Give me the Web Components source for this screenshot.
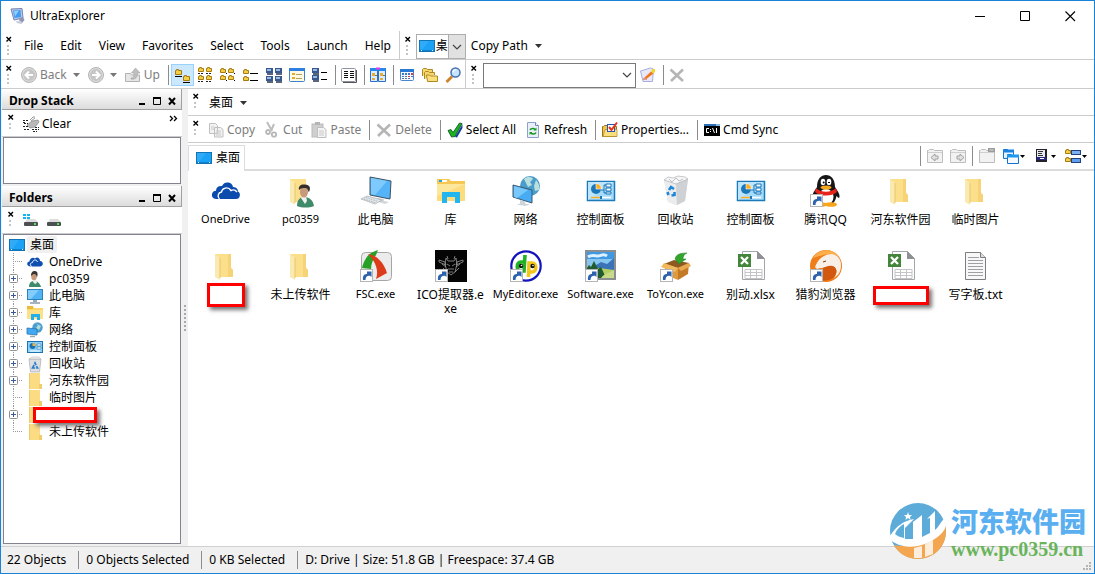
<!DOCTYPE html>
<html lang="en">
<head>
<meta charset="utf-8">
<title>UltraExplorer</title>
<style>
  body { margin: 0; background: #fff; color: #000; font: 12px/16px "Noto Sans", "Noto Sans CJK SC", sans-serif; }
</style>
</head>
<body>
<ultra-explorer></ultra-explorer>

<template id="ultra-explorer">
  <style>
    :host { display: flex; flex-direction: column; position: relative; box-sizing: border-box; min-height: 100vh; border: 1px solid #1883d7; background: #fff; }
    .bar { display: flex; align-items: center; box-sizing: border-box; height: 29px; padding-top: 2px; border-bottom: 1px solid #ccc; }
    .group { display: flex; align-items: center; align-self: stretch; margin-top: -2px; padding-top: 2px; }
    .group.end { border-right: 1px solid #ccc; }
    .menus { gap: 1px; }
    .menus bar-grip { margin-right: -2px; }
    .small { height: 27px; }
    .main { display: flex; flex: 1; }
    aside { display: flex; flex-direction: column; flex: none; width: 180px; padding: 0 0 1px 1px; background: #f0f0f0; }
    aside .bar { height: 27px; background: #fff; padding-left: 1px; }
    .stack { box-sizing: border-box; height: 47px; margin: 0 1px 2px; border: 1px solid #83838f; background: #fff; }
    nav { flex: 1; box-sizing: border-box; margin: 0 1px 1px; border: 1px solid #83838f; background: #fff; padding: 1px 0; }
    .splitter { flex: none; display: flex; align-items: center; justify-content: center; width: 6px; background: #f0f0f0; }
    .splitter i { width: 2px; height: 26px; background: repeating-linear-gradient(#a8a8a8 0 2px, #f0f0f0 2px 4px); }
    section { flex: 1; min-width: 0; display: flex; flex-direction: column; }
    .tabs { display: flex; align-items: center; box-sizing: border-box; height: 28px; border-bottom: 2px solid #dcdcdc; padding-right: 3px; }
    .tab { display: flex; align-items: center; gap: 4px; align-self: flex-end; box-sizing: border-box; height: 26px; margin-bottom: -2px; padding: 0 4px 2px 7px; border: 1px solid #dcdcdc; border-bottom: 0; background: #fff; font: inherit; line-height: 16px; color: #000; }
    .files { display: grid; grid-template-columns: repeat(auto-fill, 75px); grid-auto-rows: 75px; padding: 4px 20px 0 0; margin: 0; }
    .path { display: flex; align-items: center; gap: 7px; padding: 0 5px; border: 0; background: none; font: inherit; }
    .drive { position: relative; display: flex; width: 50px; height: 25px; }
    .drive select { appearance: none; width: 50px; border: 1px solid #adadad; border-radius: 0; padding: 0 0 0 19px; margin: 0; background: linear-gradient(90deg, #fff 31px, #adadad 31px 32px, #e1e1e1 32px); font: inherit; color: #000; }
    .drive ui-icon { position: absolute; pointer-events: none; left: 3px; top: 4px; }
    .drive ui-icon.chev { left: 33px; top: 5px; }
    .combo { display: flex; align-items: center; box-sizing: border-box; width: 153px; height: 25px; margin: 0 1px; border: 1px solid #7a7a7a; }
    .combo input { flex: 1; min-width: 0; border: 0; padding: 0 4px; font: inherit; outline: 0; background: none; }
    .combo button { border: 0; background: none; padding: 0; }
    footer { display: flex; align-items: center; height: 26px; padding: 0 0 0 6px; border-top: 1px solid #d0d0d0; background: #f0f0f0; }
    footer span + span { margin-left: 12px; padding-left: 7px; border-left: 1px solid #8c8c8c; line-height: 18px; }
    .grip { margin: auto 1px 1px auto; }
    .mark { position: absolute; right: 8px; bottom: 12px; display: flex; align-items: flex-end; gap: 5px; font-weight: 700; pointer-events: none; }
    .mark ui-icon { margin-bottom: 2px; }
    .mark b { display: block; font: 900 27px/32px "Noto Sans CJK SC", sans-serif; color: #5aaff0; }
    .mark em { display: block; font: 700 20px/24px "Liberation Serif", serif; color: #69b45a; }
  </style>
  <title-bar>UltraExplorer</title-bar>
  <div class="bar">
    <div class="group end menus">
      <bar-grip dots="3"></bar-grip>
      <menu-item>File</menu-item><menu-item>Edit</menu-item><menu-item>View</menu-item><menu-item>Favorites</menu-item><menu-item>Select</menu-item><menu-item>Tools</menu-item><menu-item>Launch</menu-item><menu-item>Help</menu-item>
    </div>
    <bar-grip dots="3"></bar-grip>
    <label class="drive"><select aria-label="Location"><option>桌</option></select><ui-icon name="desktop"></ui-icon><ui-icon class="chev" name="chevron"></ui-icon></label>
    <button class="path" type="button">Copy Path <ui-icon name="caret" w="7"></ui-icon></button>
  </div>
  <div class="bar">
    <div class="group end">
      <bar-grip dots="3"></bar-grip>
      <tool-button icon="back" disabled menu>Back</tool-button>
      <tool-button icon="forward" disabled menu></tool-button>
      <tool-button icon="up" disabled>Up</tool-button>
      <tool-sep></tool-sep>
      <tool-button square icon="v1" active></tool-button><tool-button square icon="v2"></tool-button><tool-button square icon="v3"></tool-button><tool-button square icon="v4"></tool-button><tool-button square icon="v5"></tool-button><tool-button square icon="v6"></tool-button><tool-button square icon="v7"></tool-button>
      <tool-sep></tool-sep>
      <tool-button square icon="columns"></tool-button>
      <tool-sep></tool-sep>
      <tool-button square icon="dual"></tool-button>
      <tool-sep></tool-sep>
      <tool-button square icon="calendar"></tool-button><tool-button square icon="folders"></tool-button><tool-button square icon="search"></tool-button>
    </div>
    <bar-grip dots="3"></bar-grip>
    <div class="combo"><input type="text" aria-label="Filter"><button type="button" aria-label="Show filters"><ui-icon name="chevron"></ui-icon></button></div>
    <tool-button square icon="edit"></tool-button>
    <tool-sep></tool-sep>
    <tool-button square icon="delete" disabled></tool-button>
  </div>
  <div class="main">
    <aside>
      <panel-header>Drop Stack</panel-header>
      <div class="bar"><bar-grip></bar-grip><tool-button icon="eraser">Clear</tool-button><ui-icon name="more" style="margin:0 0 10px auto"></ui-icon></div>
      <div class="stack"></div>
      <panel-header>Folders</panel-header>
      <div class="bar"><bar-grip></bar-grip><tool-button square icon="drivewin"></tool-button><tool-button square icon="drive"></tool-button></div>
      <nav aria-label="Folders">
        <tree-item root icon="desktop">桌面</tree-item>
        <tree-item icon="onedrive">OneDrive</tree-item>
        <tree-item plus icon="user">pc0359</tree-item>
        <tree-item plus icon="pc">此电脑</tree-item>
        <tree-item plus icon="library">库</tree-item>
        <tree-item plus icon="network">网络</tree-item>
        <tree-item plus icon="control">控制面板</tree-item>
        <tree-item plus icon="bin">回收站</tree-item>
        <tree-item plus icon="folder">河东软件园</tree-item>
        <tree-item icon="folder">临时图片</tree-item>
        <tree-item plus icon="folder" hiddenname></tree-item>
        <tree-item last icon="folder">未上传软件</tree-item>
      </nav>
    </aside>
    <div class="splitter"><i></i></div>
    <section>
      <div class="bar small"><bar-grip></bar-grip><button class="path" type="button">桌面 <ui-icon name="caret" w="7"></ui-icon></button></div>
      <div class="bar small">
        <bar-grip></bar-grip>
        <tool-button icon="copy" disabled>Copy</tool-button>
        <tool-button icon="cut" disabled>Cut</tool-button>
        <tool-button icon="paste" disabled>Paste</tool-button>
        <tool-sep></tool-sep>
        <tool-button icon="delete" disabled>Delete</tool-button>
        <tool-sep></tool-sep>
        <tool-button icon="check">Select All</tool-button>
        <tool-button icon="refresh">Refresh</tool-button>
        <tool-sep></tool-sep>
        <tool-button icon="props">Properties...</tool-button>
        <tool-sep></tool-sep>
        <tool-button icon="cmd">Cmd Sync</tool-button>
      </div>
      <div class="tabs">
        <button class="tab" type="button"><ui-icon name="desktop"></ui-icon>桌面</button>
        <tool-sep style="margin-left:auto"></tool-sep>
        <tool-button square icon="tabback" disabled></tool-button><tool-button square icon="tabnext" disabled></tool-button>
        <tool-sep></tool-sep>
        <tool-button square icon="tabclose" disabled></tool-button>
        <tool-button narrow icon="tabs"></tool-button><tool-button narrow icon="disk"></tool-button><tool-button narrow icon="layout"></tool-button>
      </div>
      <div class="files">
        <file-item icon="onedrive32">OneDrive</file-item>
        <file-item icon="user32">pc0359</file-item>
        <file-item cjk icon="pc32">此电脑</file-item>
        <file-item cjk icon="library32">库</file-item>
        <file-item cjk icon="network32">网络</file-item>
        <file-item cjk icon="control32">控制面板</file-item>
        <file-item cjk icon="bin32">回收站</file-item>
        <file-item cjk icon="control32">控制面板</file-item>
        <file-item cjk link icon="qq32">腾讯QQ</file-item>
        <file-item cjk icon="folder32">河东软件园</file-item>
        <file-item cjk icon="folder32">临时图片</file-item>
        <file-item icon="folder32" hiddenname="tall"></file-item>
        <file-item cjk icon="folder32">未上传软件</file-item>
        <file-item link icon="fsc32">FSC.exe</file-item>
        <file-item cjk link icon="ico32">ICO提取器.exe</file-item>
        <file-item link icon="dp32">MyEditor.exe</file-item>
        <file-item link icon="photo32">Software.exe</file-item>
        <file-item link icon="box32">ToYcon.exe</file-item>
        <file-item cjk icon="xlsx32">别动.xlsx</file-item>
        <file-item cjk link icon="fox32">猎豹浏览器</file-item>
        <file-item icon="xlsx32" hiddenname="wide"></file-item>
        <file-item cjk icon="txt32">写字板.txt</file-item>
      </div>
    </section>
  </div>
  <footer><span>22 Objects</span><span>0 Objects Selected</span><span>0 KB Selected</span><span>D: Drive | Size: 51.8 GB | Freespace: 37.4 GB</span><ui-icon class="grip" name="grip" w="12" h="12"></ui-icon></footer>
  <div class="mark"><ui-icon name="logo" w="56" h="56"></ui-icon><div><b>河东软件园</b><em>www.pc0359.cn</em></div></div>
</template>

<template id="title-bar">
  <style>
    :host { display: flex; align-items: center; height: 30px; padding: 0 2px 0 8px; gap: 5px; }
    .ctl { margin-left: auto; display: flex; }
    button { display: grid; place-items: center; width: 45px; height: 29px; padding: 0; border: 0; background: none; }
  </style>
  <ui-icon name="app"></ui-icon><span><slot></slot></span>
  <div class="ctl"><button type="button" aria-label="Minimize"><ui-icon name="wmin"></ui-icon></button><button type="button" aria-label="Maximize"><ui-icon name="wmax"></ui-icon></button><button type="button" aria-label="Close"><ui-icon name="wclose"></ui-icon></button></div>
</template>

<template id="panel-header">
  <style>
    :host { display: flex; align-items: center; box-sizing: border-box; height: 21px; padding: 3px 2px 0 7px; font-weight: 700; background: linear-gradient(#fff, #dcdcdc); border: solid #a0a0a0; border-width: 0 1px 1px 0; }
    div { margin-left: auto; display: flex; }
    button { display: grid; width: 15px; height: 16px; padding: 0; border: 0; background: none; place-items: center; }
  </style>
  <span><slot></slot></span><div><button type="button" aria-label="Minimize"><ui-icon name="pmin" w="10" h="10"></ui-icon></button><button type="button" aria-label="Maximize"><ui-icon name="pmax" w="10" h="10"></ui-icon></button><button type="button" aria-label="Close"><ui-icon name="pclose" w="10" h="10"></ui-icon></button></div>
</template>

<template id="menu-item">
  <style>
    :host { display: block; }
    button { border: 0; padding: 0 8px; background: none; font: inherit; color: inherit; }
  </style>
  <button type="button"><slot></slot></button>
</template>

<template id="tool-button">
  <style>
    :host { display: block; }
    button { display: flex; align-items: center; box-sizing: border-box; height: 22px; gap: 3px; border: 0; padding: 0 5px 0 4px; background: none; font: inherit; line-height: 16px; color: inherit; white-space: nowrap; }
    button:disabled { color: #7d7d7d; }
    :host([menu]) button { padding: 0 4px; }
    :host([square]) button { width: 23px; padding: 0; gap: 0; justify-content: center; }
    :host([narrow]) button { gap: 1px; padding: 0 4px 0 5px; }
    :host([active]) button { background: #cce8ff; border: 1px solid #99d1ff; }
    .menu { margin-left: 3px; }
  </style>
  <button type="button"></button>
</template>

<template id="file-item">
  <style>
    :host { display: flex; flex-direction: column; align-items: center; gap: 5px; font-size: 11px; line-height: 14px; text-align: center; word-break: break-all; }
    :host([cjk]) { font-size: 12px; }
    .pic { position: relative; display: block; width: 32px; height: 32px; }
    .pic .link { position: absolute; left: 0; bottom: 0; }
    .name { box-sizing: border-box; padding: 0 3px; }
    :host([cjk]) .name { padding-top: 1px; }
    .veil { box-sizing: border-box; width: 38px; height: 24px; margin-top: -4px; background: #fff; border: 3px solid #f00; box-shadow: 3px 3px 4px #777; z-index: 1; }
    .veil.wide { width: 56px; height: 19px; margin-top: -1px; }
  </style>
  <span class="pic"></span>
</template>

<template id="tree-item">
  <style>
    :host { display: flex; align-items: center; height: 17px; padding-left: 5px; }
    .branch { flex: none; align-self: stretch; width: 18px; background: repeating-linear-gradient(90deg, #999 0 1px, #fff 1px 2px) 4px 8px / 10px 1px no-repeat, repeating-linear-gradient(#999 0 1px, #fff 1px 2px) 4px 0 / 1px 100% no-repeat; }
    :host([last]) .branch { background: repeating-linear-gradient(90deg, #999 0 1px, #fff 1px 2px) 4px 8px / 10px 1px no-repeat, repeating-linear-gradient(#999 0 1px, #fff 1px 2px) 4px 0 / 1px 9px no-repeat; }
    :host([root]) .branch { display: none; }
    .branch ui-icon { margin-top: 4px; }
    .name { padding: 0 2px; margin-left: 4px; line-height: 17px; white-space: nowrap; }
    :host([root]) .name { background: #f0f0f0; border-radius: 2px; margin-left: 2px; padding: 0 3px; }
    .veil { box-sizing: border-box; width: 64px; height: 16px; margin-left: -10px; background: #fff; border: 3px solid #f00; box-shadow: 3px 3px 4px #777; z-index: 1; }
  </style>
  <span class="branch"></span>
</template>

<script>
const tiny = (x, y) => `<path d="M${x}.500 ${y + 1}.500h1v-1h2v1h2v3h-5z" fill="#f3cf45" stroke="#a87b10"/>`;
const screen = (x, y) => `<rect x="${x}" y="${y}" width="7" height="5" fill="#38598f"/><rect x="${x + 1}" y="${y + 1}" width="4" height="2" fill="#9db9dc"/><rect x="${x + 1}" y="${y + 5}" width="6" height="2" fill="#5b6678"/>`;
const tabFolder = `<path d="M.5 14.500v-12h1l1-1h4l1 1h8v12z" fill="#f2f2f2" stroke="#bdbdbd"/><path d="M1 4.500h14" stroke="#cfcfcf"/>`;
const ICONS = {
  app: `<path d="M2 1l11-.5 1 9.500-9 2z" fill="#b9c6e6" stroke="#7685b4"/><path d="M4 2.500l7.500-.5.500 7-6.500 1z" fill="#3f9bf3"/><path d="M5 3l5-.5-4 6z" fill="#8fd0ff"/><path d="M10 10l4-1 1.500 3-3 3.500-5-.5 3-2z" fill="#8e96b5"/><path d="M7 13h5l1 2H8z" fill="#c9cee0"/>`,
  wmin: `<path d="M3 8.500h10" stroke="#000"/>`,
  wmax: `<path d="M3.500 3.500h9v9h-9z" fill="none" stroke="#000"/>`,
  wclose: `<path d="M3.500 3.500l9.500 9.500M13 3.500L3.500 13" stroke="#000" stroke-width="1.100"/>`,
  pmin: `<path d="M2 8h6" stroke="#000" stroke-width="2"/>`,
  pmax: `<path d="M1.500 2.500h7v6h-7z" fill="none" stroke="#000"/><path d="M1 2h8" stroke="#000" stroke-width="2"/>`,
  pclose: `<path d="M2 2l6 6.500M8 2L2 8.500" stroke="#000" stroke-width="2"/>`,
  caret: `<path d="M0 6h7l-3.500 4z" fill="#333"/>`,
  caretoff: `<path d="M0 6h7l-3.500 4z" fill="#777"/>`,
  caretsm: `<path d="M0 7h5l-2.500 3z" fill="#000"/>`,
  chevron: `<path d="M4 6l4 4 4-4" fill="none" stroke="#444" stroke-width="1.200"/>`,
  more: `<path d="M4 5l2.500 2.500L4 10M8 5l2.500 2.500L8 10" fill="none" stroke="#000" stroke-width="1.300"/>`,
  grip: `<path d="M8 2h2v2h-2zM8 5h2v2h-2zM5 5h2v2h-2zM8 8h2v2h-2zM5 8h2v2h-2zM2 8h2v2h-2z" fill="#b4b4b4"/>`,
  plus: `<rect x=".5" y=".5" width="8" height="8" rx="1" fill="#fff" stroke="#919191"/><path d="M2 4.500h5M4.500 2v5" stroke="#3a5a9c"/>`,
  desktop: `<rect x=".5" y="2.500" width="15" height="11" fill="#1ba1f5" stroke="#1274b5"/><path d="M1 3h9l-6 8H1z" fill="#30abf8"/><path d="M1 12.500h14" stroke="#0e7fca"/><path d="M2 12.500h1M13 12.500h1" stroke="#d4efff"/>`,
  back: `<circle cx="8" cy="8" r="7.500" fill="#dcdcdc" stroke="#b4b4b4"/><circle cx="8" cy="8" r="6" fill="#c6c6c6"/><path d="M12 8H5M8 4.500L4.500 8 8 11.500" fill="none" stroke="#fff" stroke-width="2"/>`,
  forward: `<circle cx="8" cy="8" r="7.500" fill="#dcdcdc" stroke="#b4b4b4"/><circle cx="8" cy="8" r="6" fill="#c6c6c6"/><path d="M4 8h7M8 4.500L11.500 8 8 11.500" fill="none" stroke="#fff" stroke-width="2"/>`,
  up: `<path d="M.5 14.500v-8h5l1 1.500h8v6.500z" fill="#e6e6e6" stroke="#b2b2b2"/><path d="M6 11c3 0 3-2 3-5H6.500L10.500 1 15 6h-2.500c0 4-2 7-6.500 6z" fill="#bfbfbf" stroke="#a3a3a3" stroke-width=".6"/>`,
  v1: `<path d="M1.500 3.500h1v-1h2v1h3v4h-6z" fill="#f3cf45" stroke="#a87b10"/><path d="M9.500 9.500h1v-1h2v1h3v4h-6z" fill="#f3cf45" stroke="#a87b10"/><path d="M1 9.500h7M9 15.500h7" stroke="#000"/>`,
  v2: [1, 9].map(x => tiny(x, 0) + tiny(x, 8)).join('') + `<path d="M1 6.500h2M4 6.500h2M9 6.500h2M12 6.500h2M1 14.500h2M4 14.500h2M9 14.500h2M12 14.500h2" stroke="#222"/>`,
  v3: [0, 8].map(x => tiny(x, 1) + tiny(x, 8)).join('') + `<path d="M6 6.500h1M14 6.500h1M6 13.500h1M14 13.500h1" stroke="#000"/>`,
  v4: tiny(0, 2) + tiny(0, 9) + `<path d="M7 6.500h8M7 13.500h8" stroke="#000"/>`,
  v5: screen(0, 1) + screen(9, 1) + screen(0, 9) + screen(9, 9),
  v6: `<rect x=".5" y="1.500" width="15" height="13" rx="1" fill="#fffbe3" stroke="#3a82cf"/><path d="M0 2.500h16" stroke="#2d7fe0" stroke-width="3"/><path d="M3 6h3v2H3zM3 10h3v2H3z" fill="#e5a92c"/><path d="M7 7.500h6M7 11.500h6" stroke="#b9a05e"/>`,
  v7: screen(0, 1) + screen(0, 8) + `<path d="M9 5.500h6M9 12.500h6" stroke="#000"/>`,
  columns: `<rect x=".5" y="1.500" width="14" height="13" rx="1" fill="#fff" stroke="#8c94a4"/><path d="M15.500 3v12.500H2" stroke="#555" fill="none"/><path d="M3 4.500h4M3 6.500h4M3 8.500h4M3 10.500h4M9 4.500h4M9 6.500h4M9 8.500h4M9 10.500h4" stroke="#111"/>`,
  dual: `<path d="M.5 1.500h7v13h-7zM8.500 1.500h7v13h-7z" fill="#dcecff" stroke="#2a70c8"/><path d="M0 2.500h16" stroke="#2785ec" stroke-width="3"/><path d="M6 1.500h4" stroke="#e339e8" stroke-width="2"/><path d="M2 6h3v3H2zM2 11h3v2H2zM10 6h3v3h-3zM10 11h3v2h-3z" fill="#e5ad35"/><path d="M5 8.500h2M13 8.500h2" stroke="#987129"/>`,
  calendar: `<rect x="1.500" y="2.500" width="13" height="11" rx="1" fill="#f5f9ff" stroke="#4a87cf"/><path d="M1 3.500h14" stroke="#2879d6" stroke-width="3"/><path d="M3 6h2v2H3zM6 6h2v2H6zM9 6h2v2H9z" fill="#3978cb"/><path d="M12 6h2v2h-2zM9 9h2v1H9z" fill="#e53939"/><path d="M3 9h2v1H3zM6 9h2v1H6zM12 9h2v1h-2zM3 11h2v1H3zM6 11h2v1H6zM9 11h2v1H9z" fill="#5479a8"/>`,
  folders: `<path d="M.5 9V2.500l1-1h3l1 1h5V5" fill="#f4d771" stroke="#b08a20"/><path d="M2.500 12V5.500l1-1h3l1 1h5V8" fill="#f4d771" stroke="#b08a20"/><path d="M5.500 14.500l-1-6.500h3l1 1h7v5.500z" fill="#fae07b" stroke="#b08a20"/>`,
  search: `<path d="M1.500 15L7 9.500" stroke="#cf8129" stroke-width="2.800"/><circle cx="10.500" cy="5.500" r="4.500" fill="#c5e4ff" stroke="#4a6fae" stroke-width="1.500"/><path d="M8 5c.5-2 2-2.500 3-2.500" stroke="#fff" fill="none" stroke-width="1.200"/>`,
  edit: `<path d="M.5 4l10-3 3 1-1 12.500H3z" fill="#e7e9fa" stroke="#a8addb"/><path d="M4 11L11 4.500l2.500 2L7 11.500z" fill="#f07820"/><path d="M11 4l1.500-2H15v3l-2 1.500z" fill="#f6d42b"/><path d="M3 12h4" stroke="#e54b1b"/>`,
  delete: `<path d="M1.500 2.500L14 14M14 2.500L2 14" stroke="#b5b5b5" stroke-width="2.600"/>`,
  eraser: `<path d="M0 4.500h5M1 7.500h4M0 10.500h6M1 13.500h5M9 13.500h7M12 11.500h4M0 6.500h2M10 15.500h4" stroke="#222" stroke-dasharray="2 1"/><path d="M4 9L9 5l6-1 1 2-4 5-5 1z" fill="#b9b9b9" stroke="#777" stroke-width=".6"/><path d="M7 4l3-3 2 0M8 5l4-3" stroke="#999" fill="none"/>`,
  drivewin: `<path d="M0 1h3v2H0zM4 1h3v2H4zM0 4h3v2H0zM4 4h3v2H4z" fill="#14b4f0"/><path d="M2 9l2-3h8l3 3z" fill="#ddd"/><rect x="1" y="9" width="14" height="4" rx="1" fill="#4d5053"/><path d="M11 11h2" stroke="#53e34d" stroke-width="2"/>`,
  drive: `<path d="M2 9l2-3h8l3 3z" fill="#ddd"/><rect x="1" y="9" width="14" height="4" rx="1" fill="#4d5053"/><path d="M11 11h2" stroke="#53e34d" stroke-width="2"/>`,
  copy: `<path d="M1.500 1.500h6l2 2v8h-8zM6.500 5.500h6l2.500 2v7.500h-8.500z" fill="#f2f2f2" stroke="#c0c0c0"/><path d="M3 5h3M3 7h3M8 9h5M8 11h5M8 13h5" stroke="#cacaca"/>`,
  cut: `<path d="M3 0l5 9M10 2L7 9" stroke="#bdbdbd" stroke-width="2"/><circle cx="4" cy="10" r="2" fill="none" stroke="#b7b7b7" stroke-width="1.800"/><circle cx="10" cy="12.500" r="2.200" fill="none" stroke="#b7b7b7" stroke-width="1.800"/>`,
  paste: `<rect x="1" y="2" width="11" height="13" fill="#cfcfcf" stroke="#bbb"/><rect x="4" y="0" width="5" height="3" fill="#b5b5b5"/><path d="M6.500 5.500h6l2.500 2v8h-8.500z" fill="#f4f4f4" stroke="#bfbfbf"/><path d="M8 9h5M8 11h5M8 13h5" stroke="#cacaca"/>`,
  check: `<path d="M1 8.500l3-1 2 3L12.500 1 15 1.500 8 14.500l-3.500.5z" fill="#18b51c" stroke="#0b4a22" stroke-width=".8"/><path d="M8 15l7.500-13v4L10 15.500z" fill="#163f9c"/>`,
  refresh: `<path d="M2.500.5h8l3 3v12h-11z" fill="#e9f0fb" stroke="#8ba3cb"/><path d="M10.500.5v3h3" fill="#fff" stroke="#6c88b8"/><path d="M5 8c1-2 4-2 5-.5M11 10.500c-1 2-4 2-5 .5" stroke="#159a1c" stroke-width="1.500" fill="none"/><path d="M8.500 8.500h3v-3zM4.500 13v-3h3z" fill="#159a1c"/>`,
  props: `<path d="M.5 14.500v-10h1l1-1h3l1 1h8v10z" fill="#efc54a" stroke="#9c7415"/><path d="M3 7.500h12v7H1z" fill="#fadf7f" stroke="#b48b24" stroke-width=".7"/><rect x="5.500" y="2.500" width="7" height="7" fill="#fff" stroke="#2657b5"/><path d="M7 5l2.500 3L15 .5" stroke="#e8311e" stroke-width="2" fill="none"/>`,
  cmd: `<rect y="2" width="16" height="12" fill="#000"/><rect y="2" width="16" height="2" fill="#2b6fb7"/><rect x="12" y="2" width="4" height="2" fill="#8bb6dc"/><path d="M5 6.500H2.500v4H5M6.500 7v1M6.500 9v1M8.500 6l2 5M12.500 6v5" stroke="#fff" fill="none"/>`,
  tabback: tabFolder + `<path d="M11 8H8V6L4 9.500 8 13v-2h3z" fill="#e2e2e2" stroke="#a2a2a2"/>`,
  tabnext: tabFolder + `<path d="M7 8h3V6l4 3.500L10 13v-2H7z" fill="#e2e2e2" stroke="#a2a2a2"/>`,
  tabclose: tabFolder + `<rect x="9" y="0" width="7" height="4" fill="#9b9b9b"/><path d="M10.500 2h4" stroke="#ddd"/>`,
  tabs: `<path d="M.5 10.500v-9h4l1 1.500h5v7z" fill="#eaf4ff" stroke="#1272cd"/><path d="M0 3h11" stroke="#1a83e2" stroke-width="3"/><path d="M4.500 15.500v-9h4l1 1.500h6v7.500z" fill="#f4faff" stroke="#1272cd"/><path d="M4 8h12" stroke="#1a9bf0" stroke-width="3"/>`,
  disk: `<path d="M2 1h11v13H2z" fill="#20222c"/><path d="M3 2h8v7H3z" fill="#e6e8f2"/><path d="M4 3.500h5M4 5.500h4M4 7.500h5" stroke="#333"/><path d="M2 9h10l1 3H3z" fill="#262a80"/><path d="M6 10.500h4" stroke="#fff"/>`,
  layout: tiny(0, 1) + tiny(0, 9) + `<rect x="6.500" y="2.500" width="9" height="4" fill="#7cb1f1" stroke="#23417d"/><rect x="6.500" y="10.500" width="9" height="4" fill="#5f9ff1" stroke="#23417d"/>`,
  onedrive: `<path d="M4 12.500C1 12.500 0 11 .2 9.500.4 8 2 7.500 2.500 7.500 3 4 6 3 8 4.500 10 2.500 13 4 13 7c2 0 3 1.500 2.800 3-.2 1.500-1.300 2.500-2.800 2.500z" fill="#0f4fb0"/><path d="M5 12.500c-3-1-1.500-4 .5-4C6 5.500 9.500 5 10.500 8" stroke="#fff" stroke-width="1" fill="none"/>`,
  user: `<path d="M2 16c0-4 2-6 5-6s6 2 7 6z" fill="#3f8a6b"/><path d="M6 9h3l1 3-2 1-2-2z" fill="#eee"/><ellipse cx="7" cy="5.500" rx="2.800" ry="3.800" fill="#c79a7c"/><path d="M4 5c0-3 1-5 4-5s3 4 2 6c-1-2-1-3-3-3-1 0-2 1-3 2z" fill="#3a3532"/>`,
  pc: `<rect x=".5" y="1.500" width="15" height="10" fill="#51b3f6" stroke="#2a83bd"/><path d="M1 2h11L4 11H1z" fill="#84ccfb"/><path d="M6 12h4v2H6z" fill="#9ab"/><path d="M3 15h10" stroke="#8b9dab" stroke-width="1.500"/>`,
  library: `<path d="M0 1h6l1 2h9v11H0z" fill="#fbd768"/><path d="M0 1h6v3H0z" fill="#eeb93a"/><path d="M0 5h16v9H0z" fill="#fde08a"/><path d="M4 15V9h9v6h-3v-3H7v3z" fill="#21b0ea"/>`,
  network: `<circle cx="10.500" cy="5.500" r="5.200" fill="#4c9fd0"/><path d="M8 1l3 2-2 3 3 2 2-4z" fill="#b5ddd8"/><path d="M0 6l10 1v6L0 12z" fill="#41a8f4" stroke="#2a76b2" stroke-width=".8"/><path d="M3 14.500h5" stroke="#9aa" stroke-width="1.500"/>`,
  control: `<rect x=".5" y="2.500" width="15" height="11" fill="#8dd2fb" stroke="#1c73af"/><circle cx="5.500" cy="7" r="3" fill="#1a72b2"/><path d="M5.500 7V4a3 3 0 013 3z" fill="#f8b437"/><path d="M10 5h4v2h-4zM10 8h4v2h-4z" fill="#fff" stroke="#2479ad" stroke-width=".6"/><path d="M3 12h10" stroke="#fff"/>`,
  bin: `<path d="M2 3h12l-1.500 13h-9z" fill="#dcdee0" stroke="#a9adb1" stroke-width=".7"/><path d="M2 3l3-2h7l2 2z" fill="#efefef" stroke="#bbb" stroke-width=".6"/><path d="M5.500 12L8 7l2.500 5z" fill="none" stroke="#2b7cc9" stroke-width="1.700" stroke-dasharray="3.500 1"/>`,
  folder: `<path d="M2 0h11v11l2 1v4H2z" fill="#fbdc83"/><path d="M2 0h1v16H2z" fill="#ecca70"/><path d="M12 11h3v5h-3z" fill="#f0cd6c"/>`,
  onedrive32: `<path d="M6 24c-3-.3-4.500-2.200-4-4.800.3-2 1.700-3.200 4-3.400C6 12.500 8.500 10.500 12 11c1.500-3 4-4 6.500-3.400 2.500.5 4 2.200 4.500 4.400 4 .4 5 2.500 5 4.500 1.500.8 2.200 2.300 1.800 4.200-.4 2.100-1.600 3.300-3.800 3.300z" fill="#0c4bae"/><path d="M9.500 24c-2.500-2-1.500-6.500 2-7 .5-4 6.500-6 9.500-1.500 2-1 4.500-.5 6 1.500" fill="none" stroke="#fff" stroke-width="1.400"/>`,
  folder32: `<path d="M5 4h16v14l2 2v7H5z" fill="#fbdf8a"/><path d="M18 4h3v14l2 2v7h-5z" fill="#f6d377"/><path d="M5 4l5 4v22l-5-3z" fill="#fbe9b2"/><path d="M10 8v20" stroke="#e9c66b"/>`,
  user32: `<path d="M5 4h16v23H5z" fill="#fbdf8a"/><path d="M5 4l5 4v22l-5-3z" fill="#fbe9b2"/><path d="M10 8v20" stroke="#e9c66b"/><path d="M12 31c0-6 3-9 7-9 5 0 9 3 10 9-5 2-12 2-17 0z" fill="#3e8a69"/><path d="M17 21h4l1 5-2 3-4-6z" fill="#f3f1ef"/><ellipse cx="19" cy="17" rx="4" ry="5.500" fill="#c69b7c"/><path d="M14 15c-1-4 2-6 6-5.500 5 .2 6 3.500 4 7.500-1.500-1.500-1-4-4-4-2 0-4 0-6 2z" fill="#332e2b"/>`,
  pc32: `<path d="M10 2l21 4-1 18-20-4z" fill="#55b4f7" stroke="#40525e"/><path d="M11 3l16 3-12 14-4-1z" fill="#7fcafd"/><path d="M18 23l6 1v2l5 1-4 2-10-3z" fill="#cfd7dc"/><path d="M1 24l6-3 15 4-7 4z" fill="#e4e7e9" stroke="#9aa1a6" stroke-width=".6"/><path d="M4 24l12 4M6 22.500l12 4" stroke="#9aa1a6" stroke-width=".7" stroke-dasharray="1.500 1"/>`,
  library32: `<path d="M2 4h12l2 2h14v19H2z" fill="#f6c751"/><path d="M4 5h8v2H4z" fill="#fff"/><path d="M4 5h3v2H4z" fill="#23a6dd"/><path d="M2 9h28v17H2z" fill="#fddc7d"/><path d="M2 9h28L2 21z" fill="#fde79d"/><path d="M7 28V17h18v11h-5v-6h-8v6z" fill="#22b5ee"/>`,
  network32: `<circle cx="20" cy="11" r="10" fill="#4a9ccb"/><path d="M14 4c4-3 8-2 9 0l-3 3 2 3-4 2zM26 5c3 3 4 7 3 10l-4 1-1-5z" fill="#b9dfdf"/><path d="M3 10l19 5v13L3 22z" fill="#48acf5" stroke="#3c596b"/><path d="M4 11l14 4L7 23l-3-1z" fill="#79c8fc"/><path d="M10 25l5 1.500v2l5 1-5 1.500-8-1.500 3-1z" fill="#ccd5da"/>`,
  control32: `<rect x="2.500" y="6.500" width="27" height="19" fill="#a5dcfc" stroke="#1c7ab9" stroke-width="1.500"/><path d="M3 7h26L3 25z" fill="#bce6ff"/><circle cx="11" cy="14" r="5" fill="#1b77b8"/><path d="M11 14V8.500a5.500 5.500 0 015.500 5.500z" fill="#f9ad25" stroke="#fff" stroke-width=".6"/><path d="M16 15h3v-5h2M19 15v3h2" fill="none" stroke="#1b77b8"/><path d="M21 9h5v3h-5zM21 13h5v3h-5zM21 17h5v2h-5z" fill="#fff" stroke="#1b77b8"/><path d="M6 22.500h20" stroke="#fff" stroke-width="1.500"/><path d="M6 22.500h9" stroke="#f9ad25" stroke-width="1.500"/><rect x="15" y="21" width="2" height="3" fill="#1b77b8"/>`,
  bin32: `<path d="M4 5l12 3 12-4-3 22-8 4-9-3z" fill="#dddfe1"/><path d="M4 5l12 3 1 22-9-3z" fill="#ebecee"/><path d="M16 8l12-4-3 22-8 4z" fill="#cfd2d5"/><path d="M4 5l4-3 5 1 5-2 7 1 3 2-12 5z" fill="#f7f7f7" stroke="#adb1b5" stroke-width=".7"/><path d="M9 4l3 3 4-4 3 3 4-2" fill="none" stroke="#bcc0c4"/><path d="M9 15l2-3 3 2M14.500 17v3l-3 .5M8.500 20l-1-3" fill="none" stroke="#1e86d6" stroke-width="2.600"/>`,
  qq32: `<path d="M7 12C7 4 11 0 16 0s9 4 9 12c2 3 5 7 4.500 10-.5 2-2 0-3-1-1 5-3 9-10 9S7 27 6 21c-1 1-3 3-3.500 1C2 19 5 15 7 12z" fill="#161616"/><ellipse cx="16" cy="22" rx="7.500" ry="8" fill="#fff"/><ellipse cx="13" cy="7" rx="2.300" ry="3.200" fill="#fff"/><ellipse cx="19" cy="7" rx="2.300" ry="3.200" fill="#fff"/><circle cx="13.700" cy="7.500" r="1" fill="#000"/><path d="M18 8q1-2 2 0" stroke="#000" fill="none"/><ellipse cx="16" cy="12.500" rx="5.500" ry="2" fill="#f6a81c"/><path d="M6 13c5 5 15 5 20 0l1 4c-5 4-10 4-17 3v4H8v-5l-3-2z" fill="#e7231b"/><ellipse cx="21" cy="29.500" rx="6" ry="2.300" fill="#f7a51b"/><ellipse cx="11" cy="29.500" rx="6" ry="2.300" fill="#f7a51b"/>`,
  fsc32: `<rect x="1.500" y="2.500" width="30" height="28" rx="4" fill="#ececec" stroke="#a6a6a6"/><path d="M2 18C5 6 11 2 18 0l-2 5c-3 4-5 9-5 14z" fill="#26a126"/><path d="M8 4c9 1 16 9 19 19l-11 6c3-8 0-17-8-25z" fill="#dd3c1b"/>`,
  ico32: `<rect width="32" height="32" fill="#050505"/><path d="M4 10l6 2 1 3-7-3zM28 10l-6 2-1 3 7-3zM11 8l2 3h6l2-3 1 6-2 8-4 3-4-3-2-8zM12 14l3 2M20 14l-3 2M13 19h6M14 22h4M7 14l4 3M25 14l-4 3M12 6l1 3M20 6l-1 3M8 18l4 4M24 18l-4 4" fill="none" stroke="#999" stroke-width=".8"/>`,
  dp32: `<circle cx="16" cy="16" r="14.700" fill="#fff" stroke="#1212be" stroke-width="2.200"/><path d="M15 5l-1 16h-3c-5 0-5-9 0-9h3" stroke="#1fb324" stroke-width="3.600" fill="none"/><path d="M18.500 27l.5-14h3c5 0 5 9 0 9h-3" stroke="#f4c51b" stroke-width="3.600" fill="none"/><circle cx="11" cy="16" r="2.200" fill="#111"/><circle cx="22.500" cy="16" r="2.200" fill="#111"/><circle cx="11.500" cy="15.500" r=".8" fill="#fff"/><circle cx="23" cy="15.500" r=".8" fill="#fff"/>`,
  photo32: `<rect x="1" y="1" width="29" height="28" fill="#87c6ef" stroke="#8b8f92" stroke-width="2"/><path d="M2 2h27v7H2z" fill="#3e99e2"/><path d="M3 7c4-3 7-1 10-1s5-3 9 0" stroke="#dcf1fd" stroke-width="3" fill="none"/><path d="M8 17l8-5 6 2 7-6v13H8z" fill="#3b73b9"/><path d="M2 19l12-1 15 2v8H2z" fill="#b5cf64"/><path d="M2 18l2-3 2 2 3-6 4 8 3-2 5 11H2z" fill="#205c2d"/><path d="M16 28c4-5 9-5 13-8v8z" fill="#cadb87"/>`,
  box32: `<path d="M4 14l14 4v12L6 25z" fill="#e09a3c"/><path d="M18 18l11-5-1 11-10 6z" fill="#c47b28"/><path d="M4 14l10-4 15 3-11 5z" fill="#8f5a20"/><path d="M1 17l3-4 14 5-3 4z" fill="#f1b95c"/><path d="M18 18l11-5 2 3-10 5z" fill="#eaa94c"/><path d="M15 9c1-5 6-6 12-6-3 1-4 4-4 6h3l-7 5-4-5z" fill="#34a52c" stroke="#207920" stroke-width=".5"/>`,
  xlsx32: `<path d="M7.500 1.500h15l7 7v21h-22z" fill="#fff" stroke="#a3a6a9"/><path d="M22 1v8h8z" fill="#8d9195"/><path d="M10 19.500h17v9H10zM10 22.500h17M10 25.500h17M15.500 19.500v9M21.500 19.500v9" fill="none" stroke="#c2c4c6"/><rect x="3" y="4" width="13" height="13" fill="#43853b"/><path d="M6 7l7 7M13 7l-7 7" stroke="#fff" stroke-width="2.300"/>`,
  fox32: `<circle cx="16" cy="16" r="16" fill="#ef7d1a"/><path d="M3 8C9-2 24-2 29 7c-8-5-16-2-26 1z" fill="#fcae4b"/><path d="M5 17c3-8 9-13 17-13 6 1 9 6 9 11 0 6-2 10-7 13 4-6 3-11-2-12-5 0-7 2-12 2-2 .5-3 2-5-1z" fill="#f8efe6"/><path d="M13 18c3-1 6-3 9-2 5 1 6 7 2 11-4 4-9 4-14 3 2-3 4-6 3-12z" fill="#d2570f"/><path d="M13 12l3-1" stroke="#7a3a10"/>`,
  txt32: `<path d="M5.500 2.500h15l5 5v22h-20z" fill="#f7f7f7" stroke="#7b7f82"/><path d="M20.500 2.500v5h5" fill="#ddd" stroke="#7b7f82"/><path d="M8 7.500h11M8 10.500h15M8 13.500h15M8 16.500h15M8 19.500h15M8 22.500h15M8 25.500h15" stroke="#9da0a2"/>`,
  link: `<rect x=".5" y=".5" width="12" height="12" fill="#fff" stroke="#b5b5b5"/><path d="M3 11c-.5-4 1-6 4-6V2.500h4.500V8L10 6.800C7 6.500 5.500 8 5.500 11z" fill="#2c62ae"/>`,
  logo: `<circle cx="28" cy="28" r="28" fill="#5cabd9"/><path d="M4 42c18 4 36-4 51-21 5 20-10 35-27 35C17 56 8 50 4 42z" fill="#f3a64f"/><path d="M0 33C7 22 14 18 24 16l-9 9v11h8V19l9-7v22l8-4V15l-3 1 8-8v19c4-3 5-8 10-12 3 4 1 12-5 17-14 12-32 15-45 8-4-2-5-4-5-7z" fill="#fff"/><path d="M5 31c2-5 5-8 9-10v14c-4-1-7-2-9-4z" fill="#5cabd9"/><path d="M24 45l8-2v12h-8zM35 41l8-4v14l-8 3z" fill="#fff" opacity=".8"/><path d="M18 9l1 3h3l-2 2 .5 3-2.500-2-2.500 2 .5-3-2-2h3z" fill="#fff"/>`
};

const shadow = (el, markup) => {
  const root = el.attachShadow({ mode: 'open' });
  if (markup) root.innerHTML = markup;
  else root.append(document.getElementById(el.localName).content.cloneNode(true));
  return root;
};
const icon = (name, w = 16, h = 16) => `<ui-icon name="${name}" w="${w}" h="${h}"></ui-icon>`;

customElements.define('ui-icon', class extends HTMLElement {
  connectedCallback() {
    if (this.shadowRoot) return;
    const w = this.getAttribute('w') || 16, h = this.getAttribute('h') || 16;
    shadow(this, `<style>:host{display:block;flex:none}svg{display:block;overflow:visible}</style><svg aria-hidden="true" width="${w}" height="${h}" viewBox="0 0 ${w} ${h}">${ICONS[this.getAttribute('name')]}</svg>`);
  }
});
customElements.define('bar-grip', class extends HTMLElement {
  connectedCallback() {
    if (this.shadowRoot) return;
    const dots = this.getAttribute('dots') === '3' ? 'M1 9h2v2h-2zM1 13h2v2h-2zM1 17h2v2h-2z' : 'M1 9h2v2h-2zM1 13h2v2h-2z';
    shadow(this, `<style>:host{display:block;flex:none;width:11px;padding-left:5px;height:20px}svg{display:block}</style><svg aria-hidden="true" width="8" height="20"><path d="M0.500 1l4.500 4.500M5 1L0.500 5.500" stroke="#000" stroke-width="1.400"/><path d="${dots}" fill="#c4c4c4"/></svg>`);
  }
});
customElements.define('tool-sep', class extends HTMLElement {
  connectedCallback() {
    if (!this.shadowRoot) shadow(this, '<style>:host{display:block;flex:none;width:1px;height:20px;padding:0 2px 0 3px}i{display:block;height:20px;background:#8c8c8c}</style><i></i>');
  }
});
customElements.define('tool-button', class extends HTMLElement {
  connectedCallback() {
    if (this.shadowRoot) return;
    const name = this.getAttribute('icon'), button = shadow(this).querySelector('button');
    button.disabled = this.hasAttribute('disabled');
    const text = this.textContent.trim();
    if (!text) button.setAttribute('aria-label', name);
    button.innerHTML = icon(name) + (text ? '<span><slot></slot></span>' : '') +
      (this.hasAttribute('menu') ? `<span class="menu">${icon('caretoff', 7)}</span>` : '') +
      (this.hasAttribute('narrow') ? icon('caretsm', 5) : '');
  }
});
customElements.define('file-item', class extends HTMLElement {
  connectedCallback() {
    if (this.shadowRoot) return;
    const root = shadow(this);
    root.querySelector('.pic').innerHTML = icon(this.getAttribute('icon'), 32, 32) + (this.hasAttribute('link') ? '<ui-icon class="link" name="link" w="13" h="13"></ui-icon>' : '');
    const label = document.createElement('span');
    if (this.hasAttribute('hiddenname')) label.className = 'veil ' + this.getAttribute('hiddenname');
    else { label.className = 'name'; label.innerHTML = '<slot></slot>'; }
    root.append(label);
  }
});
customElements.define('tree-item', class extends HTMLElement {
  connectedCallback() {
    if (this.shadowRoot) return;
    const root = shadow(this);
    if (this.hasAttribute('plus')) root.querySelector('.branch').innerHTML = icon('plus', 9, 9);
    const rest = document.createElement('template');
    rest.innerHTML = icon(this.getAttribute('icon')) + (this.hasAttribute('hiddenname') ? '<span class="veil"></span>' : '<span class="name"><slot></slot></span>');
    root.append(rest.content);
  }
});
for (const name of ['title-bar', 'panel-header', 'menu-item', 'ultra-explorer'])
  customElements.define(name, class extends HTMLElement {
    connectedCallback() { if (!this.shadowRoot) shadow(this); }
  });
</script>
</body>
</html>
